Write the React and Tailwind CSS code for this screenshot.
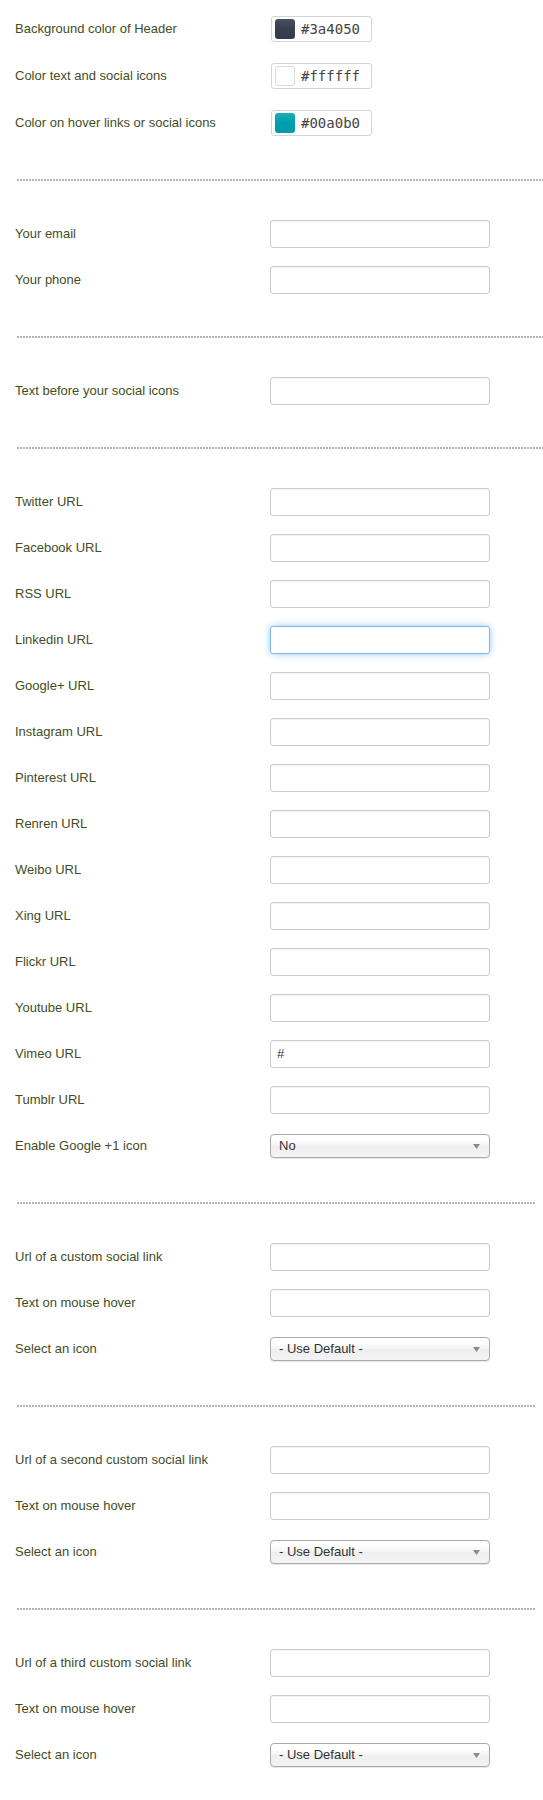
const labelCls = "w-[255px] shrink-0 pl-[15px] text-[13px] text-[#434d1f]";

const Divider = ({ full }) => (
  <div
    className={`mt-[33px] mb-[30px] ml-[17px] h-[2px] bg-[linear-gradient(to_right,#b5b5b5_2px,transparent_2px)] bg-[length:3px_2px] bg-repeat-x ${
      full ? "mr-0" : "mr-[8px]"
    }`}
  />
);

const ColorRow = ({ label, value, swatch }) => (
  <div className="flex h-[47px] items-center">
    <div className={labelCls}>{label}</div>
    <div className="ml-[16px] flex h-[26px] w-[101px] items-center rounded-[3px] border border-[#d4d4d4] bg-white pl-[3px]">
      <div className={`h-[20px] w-[20px] rounded-[3px] ${swatch}`} />
      <span className="ml-[6px] font-['DejaVu_Sans_Mono',monospace] text-[14px] leading-none text-[#444]">
        {value}
      </span>
    </div>
  </div>
);

const InputRow = ({ label, value = "", focused }) => (
  <div className="flex h-[46px] items-center">
    <div className={labelCls}>{label}</div>
    <div
      className={`ml-[15px] flex h-[28px] w-[220px] items-center rounded-[3px] border bg-white px-[6px] text-[13px] text-[#333] ${
        focused
          ? "border-[#7ab8ec] shadow-[0_0_7px_rgba(82,168,236,0.6)]"
          : "border-[#cccccc] shadow-[inset_0_1px_1px_rgba(0,0,0,0.05)]"
      }`}
    >
      {value}
    </div>
  </div>
);

const SelectRow = ({ label, value }) => (
  <div className="flex h-[46px] items-center">
    <div className={labelCls}>{label}</div>
    <div className="ml-[15px] flex h-[24px] w-[220px] items-center justify-between rounded-[4px] border border-[#aaaaaa] bg-[linear-gradient(to_bottom,#ffffff_20%,#f3f3f3_50%,#eeeeee_52%,#f4f4f4_100%)] pl-[8px] pr-[9px] text-[13px] text-[#333] shadow-[0_1px_1px_rgba(0,0,0,0.1)]">
      <span>{value}</span>
      <svg width="7" height="5" viewBox="0 0 7 5">
        <path d="M0 0 L7 0 L3.5 5 Z" fill="#8a8a8a" />
      </svg>
    </div>
  </div>
);

const socials = [
  "Twitter URL",
  "Facebook URL",
  "RSS URL",
  "Linkedin URL",
  "Google+ URL",
  "Instagram URL",
  "Pinterest URL",
  "Renren URL",
  "Weibo URL",
  "Xing URL",
  "Flickr URL",
  "Youtube URL",
  "Vimeo URL",
  "Tumblr URL",
];

export default function App() {
  return (
    <div className="min-h-[1800px] w-[543px] overflow-hidden bg-white pt-[5px] font-['Liberation_Sans',Arial,sans-serif]">
      <ColorRow
        label="Background color of Header"
        value="#3a4050"
        swatch="bg-[linear-gradient(to_bottom,#4a505f,#3a4050_45%,#353a48)]"
      />
      <ColorRow
        label="Color text and social icons"
        value="#ffffff"
        swatch="border border-[#dcdcdc] bg-white"
      />
      <ColorRow
        label="Color on hover links or social icons"
        value="#00a0b0"
        swatch="bg-[linear-gradient(to_bottom,#1aacba,#00a0b0_45%,#009aa9)]"
      />
      <Divider full />

      <InputRow label="Your email" />
      <InputRow label="Your phone" />
      <Divider full />

      <InputRow label="Text before your social icons" />
      <Divider full />

      {socials.map((s) => (
        <InputRow
          key={s}
          label={s}
          focused={s === "Linkedin URL"}
          value={s === "Vimeo URL" ? "#" : ""}
        />
      ))}
      <SelectRow label="Enable Google +1 icon" value="No" />
      <Divider />

      <InputRow label="Url of a custom social link" />
      <InputRow label="Text on mouse hover" />
      <SelectRow label="Select an icon" value="- Use Default -" />
      <Divider />

      <InputRow label="Url of a second custom social link" />
      <InputRow label="Text on mouse hover" />
      <SelectRow label="Select an icon" value="- Use Default -" />
      <Divider />

      <InputRow label="Url of a third custom social link" />
      <InputRow label="Text on mouse hover" />
      <SelectRow label="Select an icon" value="- Use Default -" />
    </div>
  );
}
